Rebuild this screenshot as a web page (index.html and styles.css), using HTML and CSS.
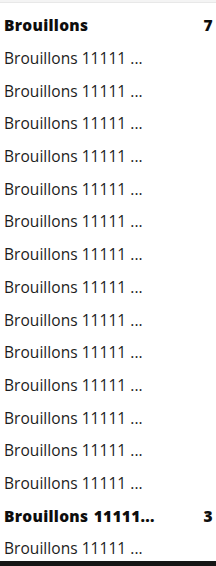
FILE: index.html
```html
<!DOCTYPE html>
<html lang="fr">
<head>
  <meta charset="UTF-8">
  <title>Brouillons</title>
  <link rel="stylesheet" href="styles.css">
</head>
<body>
  <div class="top-strip"></div>

  <ul class="folder-list">
    <li class="folder-row folder-title">
      <span class="name">Brouillons</span>
      <span class="count">7</span>
    </li>
    <li class="folder-row"><span class="name">Brouillons 11111 ...</span></li>
    <li class="folder-row"><span class="name">Brouillons 11111 ...</span></li>
    <li class="folder-row"><span class="name">Brouillons 11111 ...</span></li>
    <li class="folder-row"><span class="name">Brouillons 11111 ...</span></li>
    <li class="folder-row"><span class="name">Brouillons 11111 ...</span></li>
    <li class="folder-row"><span class="name">Brouillons 11111 ...</span></li>
    <li class="folder-row"><span class="name">Brouillons 11111 ...</span></li>
    <li class="folder-row"><span class="name">Brouillons 11111 ...</span></li>
    <li class="folder-row"><span class="name">Brouillons 11111 ...</span></li>
    <li class="folder-row"><span class="name">Brouillons 11111 ...</span></li>
    <li class="folder-row"><span class="name">Brouillons 11111 ...</span></li>
    <li class="folder-row"><span class="name">Brouillons 11111 ...</span></li>
    <li class="folder-row"><span class="name">Brouillons 11111 ...</span></li>
    <li class="folder-row"><span class="name">Brouillons 11111 ...</span></li>
    <li class="folder-row folder-title">
      <span class="name">Brouillons 11111...</span>
      <span class="count">3</span>
    </li>
    <li class="folder-row"><span class="name">Brouillons 11111 ...</span></li>
  </ul>

  <div class="bottom-bar"></div>
</body>
</html>
```

FILE: styles.css
```css
body {
  margin: 0;
  background: #fff;
  font-family: "Open Sans", "Liberation Sans", sans-serif;
  color: #1c1c1c;
  overflow: hidden;
}

.top-strip {
  height: 2px;
  background: #f4f4f4;
  border-bottom: 1px solid #e8e8e8;
}

.folder-list {
  list-style: none;
  margin: 0;
  padding: 6px 0 0 0;
}

.folder-row {
  display: flex;
  align-items: center;
  justify-content: space-between;
  height: 32.7px;
  padding: 0 3px 0 4px;
  font-size: 15.5px;
  letter-spacing: 0.05px;
  white-space: nowrap;
}

.folder-title {
  font-weight: 800;
  letter-spacing: 0.3px;
  color: #0d0d0d;
}

.folder-title .name {
  word-spacing: 1px;
}

.bottom-bar {
  position: fixed;
  left: 0;
  right: 0;
  bottom: 0;
  height: 5px;
  background: #151515;
}
```
